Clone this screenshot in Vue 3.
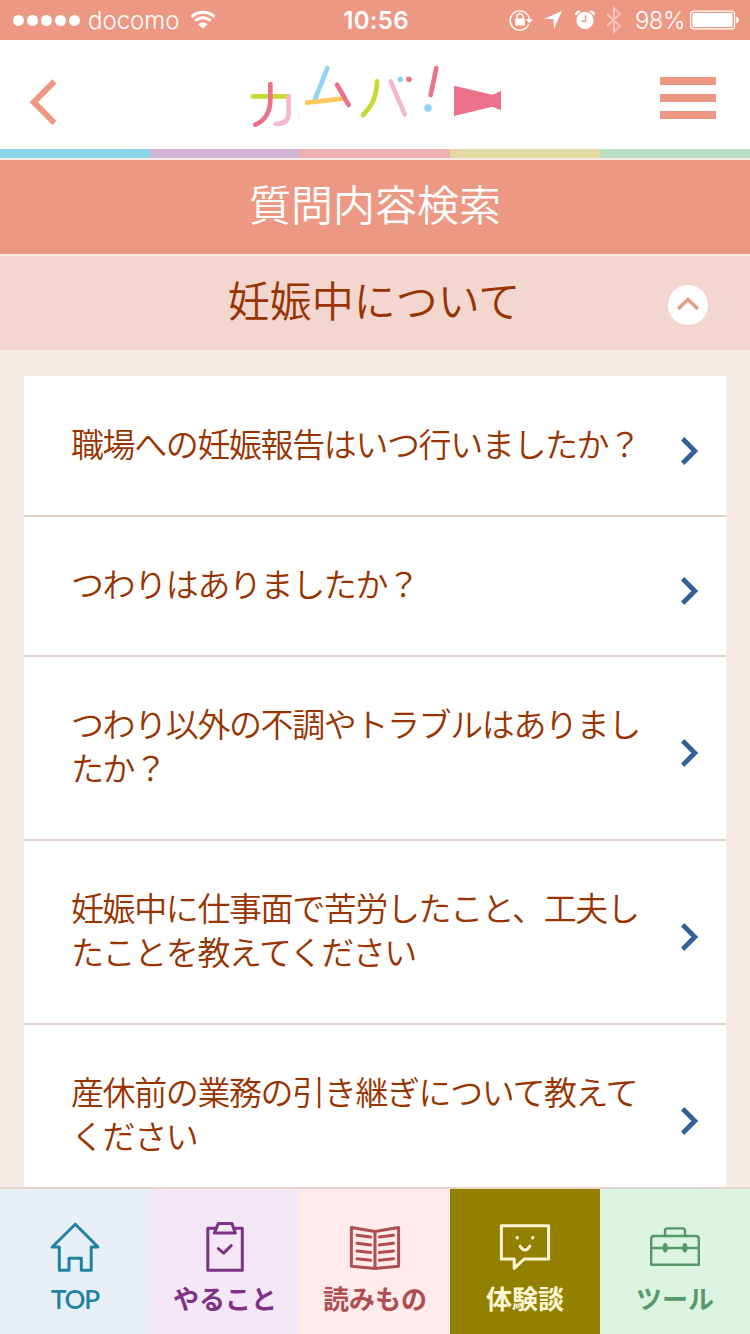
<template>
  <div class="app">
    <!-- Status bar -->
    <div class="status-bar">
      <div class="status-left">
        <div class="signal">
          <span v-for="n in 5" :key="n" class="signal-dot"></span>
        </div>
        <span class="carrier">docomo</span>
        <svg class="wifi" width="26" height="20" viewBox="0 0 26 20">
          <path d="M1.6 7 A16.3 16.3 0 0 1 24.4 7" />
          <path d="M5.3 10.8 A11 11 0 0 1 20.7 10.8" />
          <path class="solid" d="M13 18.8 L8.4 14.2 A6.6 6.6 0 0 1 17.6 14.2 Z" />
        </svg>
      </div>
      <span class="clock">10:56</span>
      <div class="status-right">
        <svg width="24" height="22" viewBox="0 0 24 22">
          <path class="thin" d="M19.8 15 A9.6 9.6 0 1 1 20.4 10.6" />
          <path class="solid" d="M16.6 10.3 H24 L20.3 14.3 Z" />
          <rect class="solid" x="6.2" y="9.6" width="9.6" height="6.8" rx="0.6" />
          <path class="shackle" d="M8 10 V7.8 A3 3 0 0 1 14 7.8 V10" />
        </svg>
        <svg class="location" width="18" height="18" viewBox="0 0 18 18">
          <path class="solid" d="M18 0 L10 18 L9.5 8.3 L0 8 Z" />
        </svg>
        <svg class="alarm" width="20" height="20" viewBox="0 0 20 20">
          <circle class="solid" cx="10" cy="10.4" r="8.6" />
          <path class="bell" d="M0.9 5 A4 4 0 0 1 5 1.6 M15 1.6 A4 4 0 0 1 19.1 5" />
          <path class="hands" d="M10.6 5.2 V11.2 H6.4" />
        </svg>
        <svg class="bluetooth" width="16" height="28" viewBox="0 0 16 28">
          <path d="M1 8 L14 20 L8 26 V2 L14 8 L1 20" />
        </svg>
        <span class="percent">98%</span>
        <svg class="battery" width="49" height="20" viewBox="0 0 49 20">
          <rect x="0.6" y="1.1" width="44" height="17.8" rx="3" />
          <rect class="solid" x="2.4" y="3" width="40.2" height="14" rx="1" />
          <path class="solid" d="M46.2 6.6 Q48.8 7.2 48.8 10 Q48.8 12.8 46.2 13.4 Z" />
        </svg>
      </div>
    </div>

    <!-- Header -->
    <header class="header">
      <button class="back" aria-label="戻る">
        <svg width="32" height="50" viewBox="0 0 32 50">
          <path d="M27.4 4.4 L6.8 25.2 L27.4 46" />
        </svg>
      </button>
      <svg class="logo" width="270" height="80" viewBox="0 0 810 240" role="img" aria-label="カムバ！">
        <path class="lime" d="M39 124 H142" />
        <path class="lilac" d="M146 124 V174 Q146 207 108 207" />
        <path class="rose" d="M91 87 V132 Q91 190 46 209" />
        <path class="sky" d="M262 39 L225 133" />
        <path class="amber" d="M201 143 L308 131" />
        <path class="rose" d="M291 89 L326 150" />
        <path class="lime" d="M411 79 Q411 140 369 180" />
        <path class="lilac" d="M452 79 L494 178" />
        <circle class="fill-sky" cx="481" cy="73" r="8.5" />
        <circle class="fill-rose" cx="507" cy="73" r="8.5" />
        <path class="rose" d="M589 39 L572 120" />
        <circle class="fill-sky" cx="564" cy="159" r="11" />
        <path class="fill-rose" d="M642 92 L757 119 L783 108 V166 L757 155 L642 183 Z" />
      </svg>
      <button class="menu" aria-label="メニュー">
        <span></span>
        <span></span>
        <span></span>
      </button>
    </header>

    <div class="rainbow">
      <span class="r-blue"></span>
      <span class="r-purple"></span>
      <span class="r-pink"></span>
      <span class="r-yellow"></span>
      <span class="r-green"></span>
    </div>

    <h1 class="page-title">質問内容検索</h1>

    <div class="section-title">
      <h2>妊娠中について</h2>
      <span class="toggle">
        <svg width="24" height="16" viewBox="0 0 24 16">
          <path d="M2.2 12 L12 2.4 L21.8 12" />
        </svg>
      </span>
    </div>

    <main class="content">
      <ul class="questions">
        <li v-for="question in questions" :key="question" class="question">
          <span class="question-text">{{ question }}</span>
          <svg class="arrow" width="18" height="30" viewBox="0 0 18 30">
            <path d="M1.6 2.8 L13.8 15 L1.6 27.2" />
          </svg>
        </li>
      </ul>
    </main>

    <!-- Bottom navigation -->
    <nav class="tabs">
      <a class="tab tab-top">
        <svg width="52" height="52" viewBox="0 0 52 52">
          <path d="M26.3 3.2 L49 26 H42.2 V49.3 H32.3 V37.3 H20 V49.3 H10.3 V26 H3.2 Z" />
        </svg>
        <span class="latin">TOP</span>
      </a>
      <a class="tab tab-todo">
        <svg width="52" height="52" viewBox="0 0 52 52">
          <path d="M17.2 7.3 H8.8 V49.3 H43.3 V7.3 H35" />
          <path d="M19.3 2.6 H33 L36.3 12 H15.3 Z" />
          <path d="M19.3 27.7 L24.6 32.2 L32.2 24.6" />
        </svg>
        <span>やること</span>
      </a>
      <a class="tab tab-read">
        <svg width="52" height="52" viewBox="0 0 52 52">
          <path d="M26 10.4 L2.4 6.4 V45.2 L26 47.5 L49.6 45.2 V6.4 Z V47.5" />
          <path d="M8 14.3 L21.7 16 M8 22.2 L21.7 23.9 M8 30 L21.7 31.5 M8 37.8 L21.7 39.3" />
          <path d="M30.3 16 L44.5 14.3 M30.3 23.9 L44.5 22.2 M30.3 31.5 L44.5 30 M30.3 39.3 L44.5 37.8" />
        </svg>
        <span>読みもの</span>
      </a>
      <a class="tab tab-story">
        <svg width="52" height="52" viewBox="0 0 52 52">
          <path d="M2.4 4.7 H49.6 V38 H25.2 L15.2 47.3 V38 H2.4 Z" />
          <circle class="eye" cx="18.2" cy="16.7" r="1.7" />
          <circle class="eye" cx="33.7" cy="16.7" r="1.7" />
          <path d="M21.2 25.2 Q26 33 30.8 25.2" />
        </svg>
        <span>体験談</span>
      </a>
      <a class="tab tab-tool">
        <svg class="toolbox" width="52" height="52" viewBox="0 0 52 52">
          <path d="M2.2 43.8 V18 Q2.2 15 5.2 15 H46.8 Q49.8 15 49.8 18 V43.8 Z M2.2 27 H49.8" />
          <path d="M16 15 V9.8 Q16 7.4 18.4 7.4 H33.6 Q36 7.4 36 9.8 V15" />
          <ellipse class="latch" cx="16.2" cy="26.8" rx="2.5" ry="4.7" />
          <ellipse class="latch" cx="35.9" cy="26.8" rx="2.5" ry="4.7" />
        </svg>
        <span>ツール</span>
      </a>
    </nav>
  </div>
</template>

<script setup>
const questions = [
  '職場への妊娠報告はいつ行いましたか？',
  'つわりはありましたか？',
  'つわり以外の不調やトラブルはありましたか？',
  '妊娠中に仕事面で苦労したこと、工夫したことを教えてください',
  '産休前の業務の引き継ぎについて教えてください'
]
</script>

<style>
body {
  margin: 0;
  overflow: hidden;
}
</style>

<style scoped>
.app {
  display: flex;
  flex-direction: column;
  width: 750px;
  height: 1334px;
  overflow: hidden;
  background: #f7ebe7;
  font-family: "Noto Sans CJK JP", sans-serif;
}

svg {
  display: block;
  flex: none;
  fill: none;
}

button {
  padding: 0;
  border: 0;
  background: none;
}

/* Status bar */
.status-bar {
  display: grid;
  grid-template-columns: 1fr 66px 1fr;
  align-items: center;
  flex: none;
  height: 40px;
  padding: 0 11px 0 13px;
  background: #ec9883;
  color: #fff;
  font-family: Inter, sans-serif;
  font-size: 24px;
  line-height: 40px;
}

.status-bar svg {
  stroke: #fff;
}

.status-bar .solid {
  fill: #fff;
  stroke: none;
}

.status-left,
.status-right {
  display: flex;
  align-items: center;
}

.status-right {
  justify-content: flex-end;
}

.signal {
  display: flex;
  gap: 3px;
}

.signal-dot {
  width: 11px;
  height: 11px;
  border-radius: 50%;
  background: #fff;
}

.carrier {
  margin-left: 8px;
  width: 91px;
  padding-top: 2px;
  font-weight: 300;
  line-height: 38px;
}

.wifi {
  margin-left: 11px;
  stroke-width: 3;
}

.clock {
  padding-top: 2px;
  font-weight: 600;
  font-size: 24px;
  letter-spacing: 0.3px;
  line-height: 38px;
  text-align: center;
  white-space: nowrap;
}

.thin {
  stroke-width: 1.4;
}

.shackle {
  stroke-width: 1.5;
}

.location {
  margin-left: 11px;
}

.alarm {
  margin-left: 13px;
}

.bell {
  stroke-width: 2;
}

.status-bar .hands {
  stroke: #ec9883;
  stroke-width: 1.5;
}

.bluetooth {
  margin-left: 11px;
  stroke-width: 1.8;
  opacity: 0.45;
}

.percent {
  margin-left: 13px;
  width: 50px;
  padding-top: 2px;
  font-weight: 300;
  font-size: 24px;
  letter-spacing: -0.6px;
  line-height: 38px;
}

.battery {
  margin-left: 5px;
  stroke-width: 1.2;
}

/* Header */
.header {
  display: flex;
  justify-content: space-between;
  flex: none;
  height: 94px;
  padding: 15px 34px 0 27px;
  background: #fff;
}

.back {
  width: 63px;
  height: 50px;
  margin-top: 22px;
}

.back path {
  stroke: #ec9883;
  stroke-width: 6;
}

.logo {
  stroke-width: 14;
  stroke-linecap: round;
}

.lime {
  stroke: #c8d834;
}

.lilac {
  stroke: #f4b6d3;
}

.rose {
  stroke: #ec7189;
}

.sky {
  stroke: #8fd3f7;
}

.amber {
  stroke: #fcca5c;
}

.fill-sky {
  fill: #8fd3f7;
}

.fill-rose {
  fill: #ec7189;
}

.menu {
  display: flex;
  flex-direction: column;
  gap: 9px;
  width: 56px;
  height: 42px;
  margin-top: 22px;
}

.menu span {
  width: 56px;
  height: 8px;
  background: #ec9883;
}

.rainbow {
  display: grid;
  grid-template-columns: repeat(5, 1fr);
  flex: none;
  height: 9px;
  margin-bottom: 2px;
}

.r-blue {
  background: #87d5e8;
}

.r-purple {
  background: #d2b4d4;
}

.r-pink {
  background: #eeb0b1;
}

.r-yellow {
  background: #e3d9a2;
}

.r-green {
  background: #b9dec4;
}

/* Titles */
.page-title {
  flex: none;
  height: 94px;
  margin: 0 0 2px;
  background: #ec9883;
  color: #fff;
  font-size: 42px;
  font-weight: 350;
  line-height: 85px;
  text-align: center;
}

.section-title {
  display: flex;
  align-items: center;
  flex: none;
  height: 94px;
  padding: 0 42px 0 80px;
  background: #f2d6cf;
}

.section-title h2 {
  flex: 1;
  margin: 0 0 9px;
  color: #993300;
  font-size: 42px;
  font-weight: 350;
  line-height: 85px;
  text-align: center;
}

.toggle {
  display: flex;
  align-items: center;
  justify-content: center;
  width: 40px;
  height: 40px;
  margin-top: 4px;
  border-radius: 50%;
  background: #fff;
}

.toggle path {
  stroke: #ec9883;
  stroke-width: 3.4;
}

/* Question list */
.content {
  flex: 1;
  min-height: 0;
  padding: 26px 24px 0;
  overflow: hidden;
}

.questions {
  margin: 0;
  padding: 1px 0 0;
  background: #fff;
  list-style: none;
}

.question {
  display: flex;
  align-items: center;
  justify-content: space-between;
  padding: 44px 27px 50px 47px;
  border-bottom: 2px solid #e3d3cb;
}

.question-text {
  width: 580px;
  color: #993300;
  font-size: 33px;
  font-weight: 350;
  letter-spacing: -1.4px;
  line-height: 44px;
}

.arrow {
  margin-top: 14px;
  margin-bottom: -2px;
}

.arrow path {
  stroke: #336197;
  stroke-width: 4.8;
}

/* Bottom navigation */
.tabs {
  display: grid;
  grid-template-columns: repeat(5, 1fr);
  flex: none;
  height: 145px;
  border-top: 2px solid #e6d4cd;
}

.tab {
  display: flex;
  flex-direction: column;
  align-items: center;
  padding-top: 32px;
  font-size: 26px;
  font-weight: 700;
  line-height: 50px;
}

.tab svg {
  stroke: currentColor;
  stroke-width: 3;
  stroke-linecap: round;
  stroke-linejoin: round;
}

.tab .toolbox {
  stroke-width: 2.4;
}

.latin {
  padding-top: 1px;
  font-family: Lato, sans-serif;
  font-size: 26px;
  font-weight: 600;
  letter-spacing: -1.2px;
}

.eye,
.latch {
  fill: currentColor;
  stroke: none;
}

.tab-top {
  background: #e9eff7;
  color: #1e84a2;
}

.tab-todo {
  background: #f4e8f6;
  color: #7e3187;
}

.tab-read {
  background: #ffebeb;
  color: #af4e52;
}

.tab-story {
  background: #948000;
  color: #fff6d6;
}

.tab-tool {
  background: #dbf5e2;
  color: #569869;
}
</style>
